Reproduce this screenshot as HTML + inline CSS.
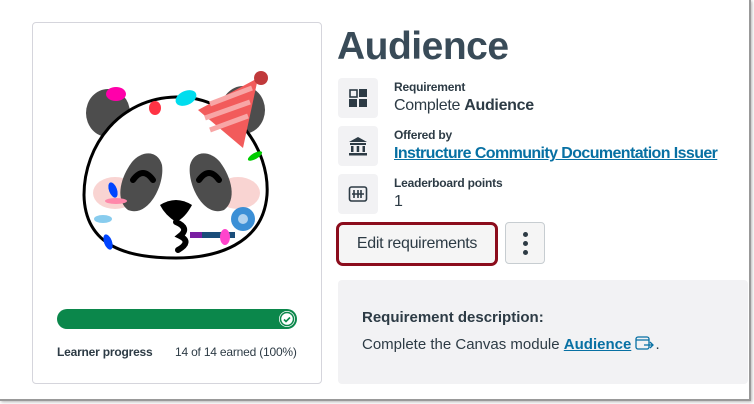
<!DOCTYPE html>
<html><head><style>
*{box-sizing:border-box;margin:0;padding:0}
body{width:754px;height:404px;background:#fff;font-family:"Liberation Sans",sans-serif;color:#2d3b45;position:relative;overflow:hidden}
.frame{position:absolute;left:0;top:0;width:751px;height:401px;border-right:2px solid #999;border-bottom:2px solid #999;box-shadow:1px 1px 3px rgba(0,0,0,.3)}
.card{position:absolute;left:32px;top:22px;width:290px;height:362px;border:1px solid #d5d5dc;border-radius:4px}
.bar{position:absolute;left:57px;top:309px;width:240px;height:20px;background:#0b874b;border-radius:10px}
.chk{position:absolute;right:2px;top:2px;width:16px;height:16px;border-radius:50%;background:#fff}
.lp{position:absolute;top:345px;font-size:12px;letter-spacing:-.2px}
h1{position:absolute;left:337px;top:25px;font-size:39px;font-weight:bold;color:#394b58;letter-spacing:-.5px}
.ib{position:absolute;left:338px;width:40px;height:40px;background:#f2f2f4;border-radius:4px;display:flex;align-items:center;justify-content:center}
.lab{position:absolute;left:394px;font-size:12px;font-weight:bold;letter-spacing:-.2px}
.val{position:absolute;left:394px;font-size:16px;letter-spacing:-.3px}
a{color:#0770a3;font-weight:bold;text-decoration:underline}
.btn{position:absolute;left:336px;top:222px;width:162px;height:44px;border:3px solid #8b0c1c;border-radius:7px;background:#f5f5f5}
.btn div{width:100%;height:100%;font-size:16px;display:flex;align-items:center;justify-content:center;color:#2d3b45;letter-spacing:-.3px}
.keb{position:absolute;left:505px;top:222px;width:40px;height:42px;background:#f5f5f5;border:1px solid #c7cdd1;border-radius:4px}
.keb i{position:absolute;left:17px;width:5px;height:5px;border-radius:50%;background:#2d3b45}
.desc{position:absolute;left:338px;top:280px;width:410px;height:104px;background:#f2f2f4;border-radius:4px}
</style></head><body>
<div class="frame"></div>
<div class="card"></div>
<svg style="position:absolute;left:80px;top:68px" width="200" height="195" viewBox="80 68 200 195">
<ellipse cx="108" cy="113" rx="22" ry="24" fill="#4d4d4d"/>
<ellipse cx="243" cy="110" rx="22" ry="24" fill="#4d4d4d"/>
<path d="M176 97 C235 96 270 150 267 195 C263 245 215 258 176 258 C130 258 85 248 84 195 C84 145 120 98 176 97Z" fill="#fff" stroke="#000" stroke-width="3"/>
<ellipse cx="115" cy="193" rx="22" ry="16" fill="#f4a9a6" opacity=".5"/>
<ellipse cx="238" cy="193" rx="22" ry="16" fill="#f4a9a6" opacity=".5"/>
<path d="M132 162 C120 178 115 200 128 210 C148 218 165 185 162 165 C158 150 142 150 132 162Z" fill="#4d4d4d"/>
<path d="M220 162 C232 178 237 200 224 210 C204 218 187 185 190 165 C194 150 210 150 220 162Z" fill="#4d4d4d"/>
<path d="M133 180 Q143 166 153 180" stroke="#000" stroke-width="6" fill="none" stroke-linecap="round"/>
<path d="M199 180 Q209 166 219 180" stroke="#000" stroke-width="6" fill="none" stroke-linecap="round"/>
<path d="M160 205 Q176 195 192 205 Q185 218 176 222 Q165 215 160 205Z" fill="#000"/>
<path d="M176 222 Q190 228 180 236 Q192 242 178 250" stroke="#000" stroke-width="6" fill="none" stroke-linecap="round"/>
<rect x="190" y="232" width="45" height="6" fill="#1a4d7a"/>
<rect x="190" y="232" width="12" height="6" fill="#7a1fa2"/>
<circle cx="243" cy="219" r="12" fill="#3b8fd6"/>
<circle cx="243" cy="219" r="5" fill="#fff" opacity=".6"/>
<path d="M198 110 L258 78 L243 148Z" fill="#f25b5b"/>
<path d="M210 104 L252 88 M205 118 L250 102 M210 130 L248 116" stroke="#f8a6a6" stroke-width="5"/>
<circle cx="261" cy="78" r="7" fill="#c0393b"/>
<ellipse cx="116" cy="94" rx="10" ry="7" fill="#f0a"/>
<ellipse cx="155" cy="108" rx="6" ry="7" fill="#f34"/>
<ellipse cx="186" cy="98" rx="11" ry="7" fill="#0de" transform="rotate(-25 186 98)"/>
<ellipse cx="255" cy="156" rx="8" ry="3" fill="#0c0" transform="rotate(-30 255 156)"/>
<ellipse cx="113" cy="190" rx="4" ry="8" fill="#04f" transform="rotate(-20 113 190)"/>
<ellipse cx="116" cy="201" rx="11" ry="3" fill="#f8a"/>
<ellipse cx="103" cy="219" rx="9" ry="4" fill="#8ce"/>
<ellipse cx="108" cy="242" rx="4" ry="8" fill="#04f" transform="rotate(-20 108 242)"/>
<ellipse cx="225" cy="237" rx="5" ry="8" fill="#f4c"/>
</svg>
<div class="bar"><div class="chk"><svg width="16" height="16"><circle cx="8" cy="8" r="6.5" fill="none" stroke="#0b874b" stroke-width="1.5"/><path d="M5 8.5l2 2 4-4" stroke="#0b874b" stroke-width="1.6" fill="none"/></svg></div></div>
<div class="lp" style="left:57px;font-weight:bold">Learner progress</div>
<div class="lp" style="left:175px">14 of 14 earned (100%)</div>
<h1>Audience</h1>
<div class="ib" style="top:78px"><svg width="20" height="20"><rect x="2" y="2" width="7" height="7" fill="none" stroke="#2d3b45" stroke-width="1.6"/><rect x="11" y="1" width="8" height="8" fill="#2d3b45"/><rect x="1" y="11" width="8" height="8" fill="#2d3b45"/><rect x="11" y="11" width="8" height="8" fill="#2d3b45"/></svg></div>
<div class="lab" style="top:80px">Requirement</div>
<div class="val" style="top:97px">Complete <b>Audience</b></div>
<div class="ib" style="top:126px"><svg width="20" height="20"><path d="M10 1L1 6h18z" fill="#2d3b45"/><rect x="2" y="7" width="16" height="2" fill="#2d3b45"/><rect x="3" y="10" width="2.5" height="6" fill="#2d3b45"/><rect x="8.7" y="10" width="2.5" height="6" fill="#2d3b45"/><rect x="14.5" y="10" width="2.5" height="6" fill="#2d3b45"/><rect x="1" y="17" width="18" height="2.5" fill="#2d3b45"/></svg></div>
<div class="lab" style="top:128px">Offered by</div>
<div class="val" style="top:145px"><a style="letter-spacing:-.6px">Instructure Community Documentation Issuer</a></div>
<div class="ib" style="top:174px"><svg width="20" height="20"><rect x="1.5" y="3" width="17" height="14" rx="2" fill="none" stroke="#2d3b45" stroke-width="1.6"/><path d="M6 6v8M10 6v8M13 6v8M4 10h12" stroke="#2d3b45" stroke-width="1.6"/></svg></div>
<div class="lab" style="top:176px">Leaderboard points</div>
<div class="val" style="top:193px">1</div>
<div class="btn"><div>Edit requirements</div></div>
<div class="keb"><i style="top:9px"></i><i style="top:18px"></i><i style="top:27px"></i></div>
<div class="desc">
<div style="position:absolute;left:24px;top:29px;font-size:15px;font-weight:bold">Requirement description:</div>
<div style="position:absolute;left:24px;top:56px;font-size:15px">Complete the Canvas module <a>Audience</a> <svg width="20" height="14" style="vertical-align:-1px"><rect x="1" y="1" width="13" height="12" rx="2" fill="none" stroke="#0770a3" stroke-width="1.3"/><path d="M1 4h13M9 9h9M15 6l3 3-3 3" stroke="#0770a3" stroke-width="1.3" fill="none"/></svg>.</div>
</div>
</body></html>
